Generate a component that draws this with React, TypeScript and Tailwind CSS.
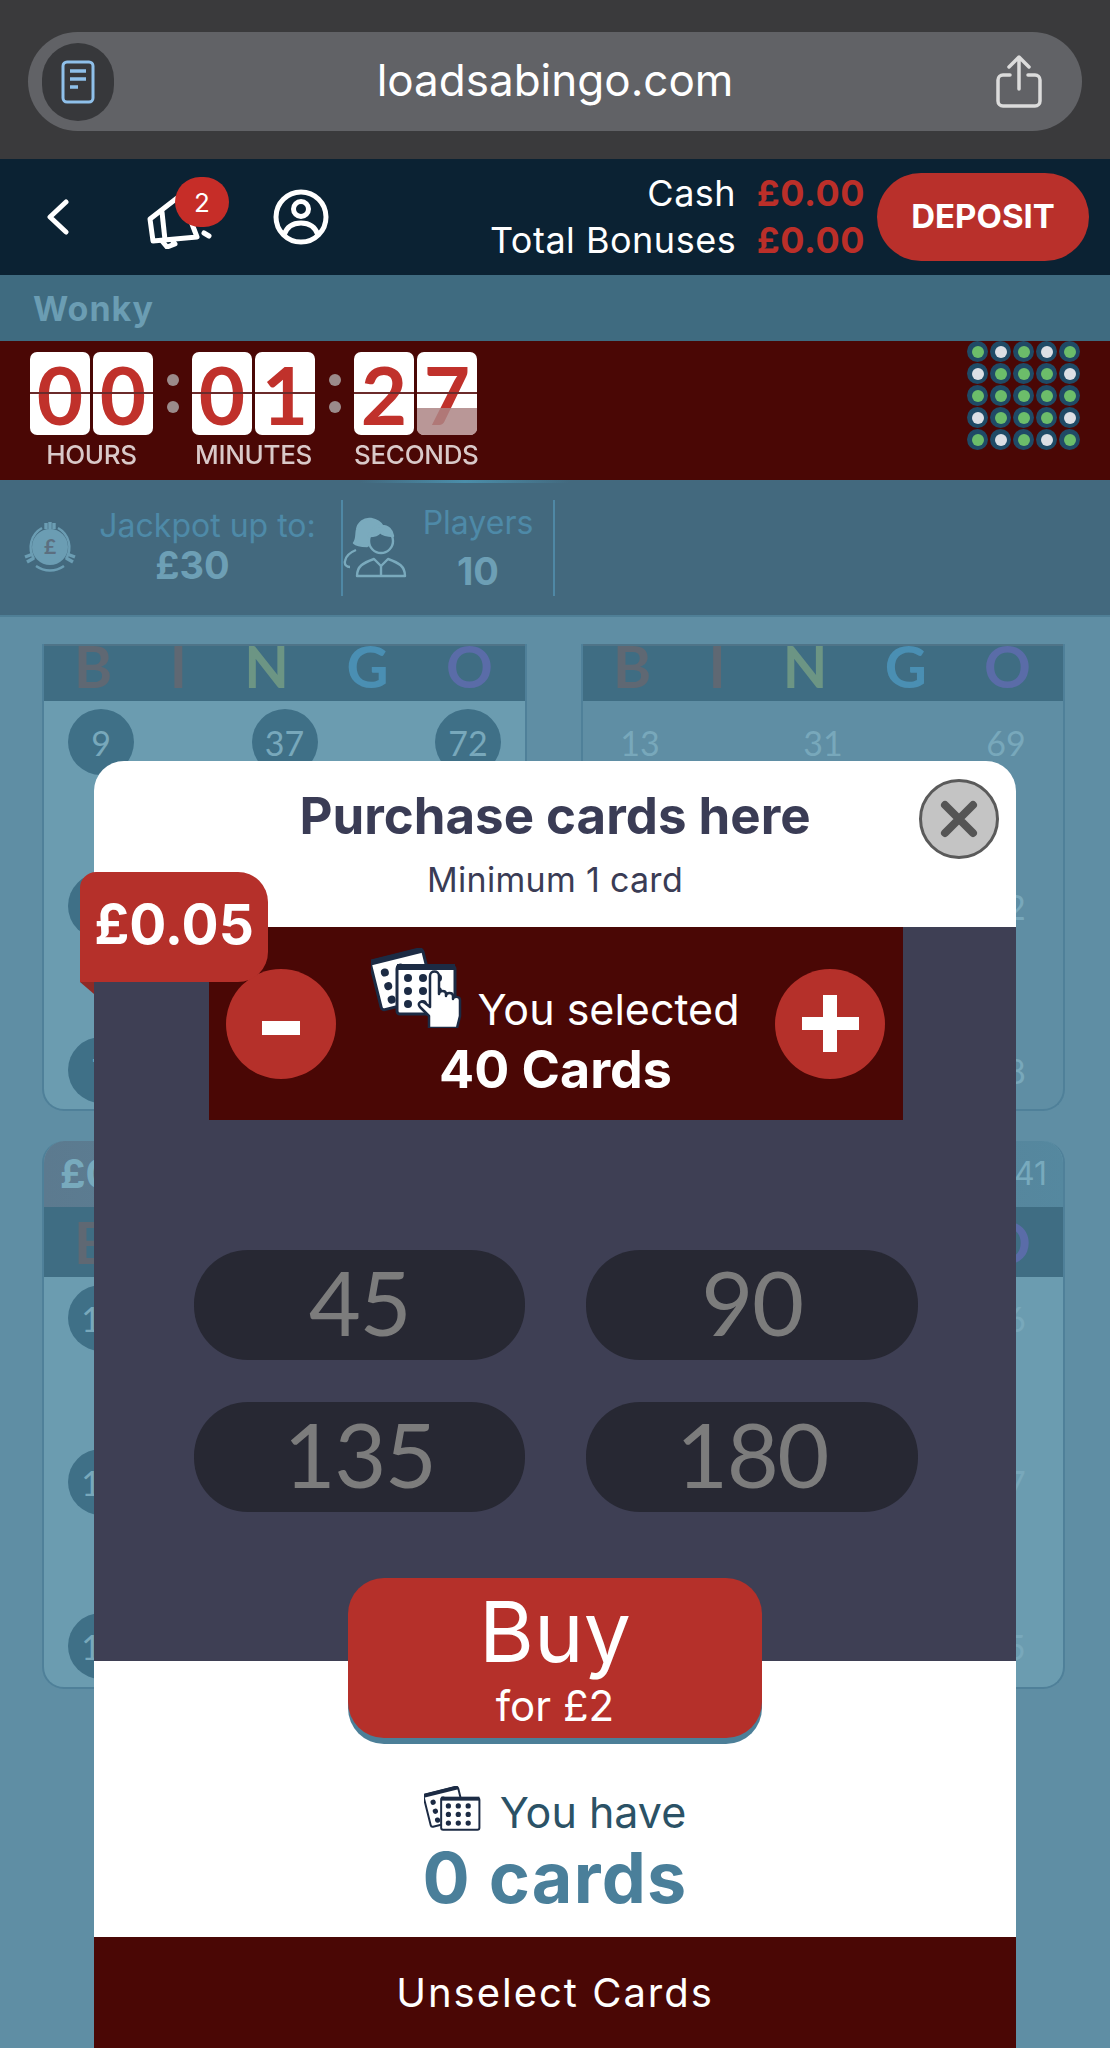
import React from 'react';

const dotRows = ['gwgwg', 'wgggw', 'ggggg', 'wgggw', 'gwgwg'];

const ReaderIcon = () => (
  <svg width="34" height="44" viewBox="0 0 34 44" fill="none" stroke="#8fc0ea" strokeWidth="3">
    <rect x="2" y="2" width="30" height="40" rx="4" />
    <path d="M9 11h16M9 19h16M9 27h8" strokeWidth="3.5" />
  </svg>
);

const ShareIcon = () => (
  <svg width="46" height="54" viewBox="0 0 46 54" fill="none" stroke="#dcdcdc" strokeWidth="3.5" strokeLinecap="round" strokeLinejoin="round">
    <path d="M23 34V3M13 12l10-10 10 10" />
    <path d="M14 20H7a5 5 0 0 0-5 5v21a5 5 0 0 0 5 5h32a5 5 0 0 0 5-5V25a5 5 0 0 0-5-5h-7" />
  </svg>
);

const Megaphone = () => (
  <svg width="70" height="58" viewBox="0 0 70 58" fill="none" stroke="#fff" strokeWidth="5" strokeLinejoin="round" strokeLinecap="round">
    <path d="M3 28L34 4l16 42L6 50z" />
    <path d="M15 21l3 28" />
    <path d="M15 50l5 6 8-3-3-4" />
    <path d="M58 30l5-3M57 42l5 3" />
  </svg>
);

const UserIcon = () => (
  <svg width="56" height="56" viewBox="0 0 56 56" fill="none" stroke="#fff" strokeWidth="5">
    <circle cx="28" cy="28" r="25" />
    <circle cx="28" cy="20" r="7.5" />
    <path d="M11 46c3-9 10-12 17-12s14 3 17 12" />
  </svg>
);

const CoinIcon = () => (
  <svg width="56" height="56" viewBox="0 0 56 56" fill="none" stroke="#6b9db3" strokeWidth="2.4">
    <path d="M12 39a22 22 0 0 1 8-31M36 8a22 22 0 0 1 8 31M14 46a24 24 0 0 0 28 0" />
    <circle cx="28" cy="27" r="18" fill="#6b9db3" stroke="none" />
    <path d="M24 3v6M28 2v7M32 3v6M3 37l8-3M5 42l7-4M53 37l-8-3M51 42l-7-4" strokeWidth="3.4" />
    <text x="28" y="34" textAnchor="middle" fontSize="21" fontWeight="700" fill="#5c6f80" stroke="none" fontFamily="Lato, sans-serif">£</text>
  </svg>
);

const PeopleIcon = () => (
  <svg width="70" height="64" viewBox="0 0 70 64" fill="none" stroke="#7aaabd" strokeWidth="2.4" strokeLinejoin="round">
    <path d="M24 30c-6 0-11-1-13-3 3-3 2-8 3-13 1-7 7-12 14-11 6 1 10 4 12 8l-8 14z" fill="#7aaabd" />
    <path d="M13 34c-5 2-10 5-11 11-1 4 2 6 5 6" />
    <circle cx="38" cy="25" r="12" fill="#43697e" />
    <path d="M26 20c3-9 8-11 13-10 6 0 10 4 11 10-8 0-11-2-13-4-2 3-6 4-11 4z" fill="#7aaabd" />
    <path d="M14 60c0-10 6-13 17-17l7 7 7-7c11 4 17 7 17 17z" />
    <path d="M38 50v10" />
  </svg>
);

const CardsIcon = ({ hand, width, height }: { hand?: boolean; width: number; height: number }) => (
  <svg width={width} height={height} viewBox="0 0 94 80">
    <g transform="rotate(-14 25 32)">
      <rect x="4" y="8" width="54" height="50" rx="3" fill="#fff" stroke="#1c2b44" strokeWidth="3" />
      <rect x="4" y="6" width="54" height="6" fill="#1c2b44" />
      {[22, 36, 50].map((y) => <circle key={y} cx="16" cy={y} r="4" fill="#1c2b44" />)}
      <circle cx="32" cy="21" r="4" fill="#1c2b44" />
    </g>
    <rect x="26" y="18" width="58" height="48" rx="3" fill="#fff" stroke="#1c2b44" strokeWidth="3" />
    <rect x="26" y="16" width="58" height="6" fill="#1c2b44" />
    {[30, 43, 56].map((y) =>
      [37, 52, 67].map((x) => <circle key={`${x}-${y}`} cx={x} cy={y} r="4" fill="#1c2b44" />),
    )}
    {hand && (
      <path
        d="M58 80V68l-9-9c-3-4 1-7 5-4l5 4V28c0-6 9-6 9 0v18c0-4 7-4 7 0v2c0-4 7-4 7 0v3c0-3 7-3 7 1v16l-3 12z"
        fill="#fff"
        stroke="#1c2b44"
        strokeWidth="2.5"
        strokeLinejoin="round"
      />
    )}
  </svg>
);

const Ball = ({ n, circled }: { n: number; circled?: boolean }) => (
  <div className={`w-[66px] h-[66px] rounded-full flex items-center justify-center font-['Lato',sans-serif] text-[34px] ${circled ? 'bg-[#3f7087] text-[#78a8bb]' : 'text-[#78a8bb]'}`}>
    {n}
  </div>
);

type CardProps = { rows: number[][]; light?: boolean; circled?: boolean; tall?: boolean; left?: string; right?: string };

const BingoCard = ({ rows, light, circled, tall, left, right }: CardProps) => (
  <div className={`border-x-2 border-b-2 border-[#4f8099] rounded-b-[22px] ${tall ? 'h-[548px] rounded-t-[22px] overflow-hidden' : 'h-[467px]'} ${light ? 'bg-[#6b9cb0]' : 'bg-[#5f8ea4]'}`}>
    {tall && (
      <div className="h-[66px] bg-gradient-to-r from-[#5c7a8f] to-[#55889f] flex items-center justify-between px-[16px]">
        <span className="text-[40px] font-bold text-[#78aabd]">{left}</span>
        <span className="text-[32px] text-[#78aabd]">{right}</span>
      </div>
    )}
    <div className={`bg-[#3f6d83] flex justify-between pl-[30px] pr-[32px] font-['Lato',sans-serif] font-bold text-[58px] ${tall ? 'h-[70px] items-center leading-none' : 'h-[57px] items-start leading-[40px] border-t-2 border-[#4f7488]'}`}>
      <span className="text-[#5f6873]">B</span>
      <span className="text-[#5f6873]">I</span>
      <span className="text-[#6c9584]">N</span>
      <span className="text-[#4a8fb3]">G</span>
      <span className="text-[#5a6ca8]">O</span>
    </div>
    <div className="flex flex-col gap-[98px] pt-[8px] px-[24px]">
      {rows.map((row) => (
        <div key={row[0]} className="flex justify-between">
          {row.map((n) => <Ball key={n} n={n} circled={circled} />)}
        </div>
      ))}
    </div>
  </div>
);

const Pill = ({ n }: { n: number }) => (
  <div className="h-[110px] rounded-[54px] bg-[#272833] flex items-center justify-center pb-[8px] font-['Lato',sans-serif] text-[90px] leading-none tracking-[-1.5px] text-[#7c7c7c]">
    {n}
  </div>
);

const App: React.FC = () => {
  return (
    <div className="relative w-[1110px] h-[2048px] overflow-hidden bg-[#5f8ea4] font-['Inter',sans-serif]">
      {/* browser bar */}
      <div className="h-[159px] bg-[#3a3a3c] pt-[32px] px-[28px]">
        <div className="relative h-[99px] rounded-[50px] bg-[#616266] flex items-center justify-between pl-[14px] pr-[40px]">
          <div className="w-[72px] h-[78px] rounded-full bg-[#37383b] flex items-center justify-center">
            <ReaderIcon />
          </div>
          <span className="text-[44px] text-white -mt-[3px]">loadsabingo.com</span>
          <ShareIcon />
        </div>
      </div>

      {/* account header */}
      <div className="h-[116px] bg-[#0b2233] flex items-center pl-[46px] pr-[21px]">
        <svg width="24" height="36" viewBox="0 0 24 36" fill="none" stroke="#fff" strokeWidth="5" strokeLinecap="round" strokeLinejoin="round">
          <path d="M20 3L4 18l16 15" />
        </svg>
        <div className="relative ml-[77px] mt-[6px]">
          <Megaphone />
          <div className="absolute -top-[14px] left-[28px] w-[54px] h-[50px] rounded-full bg-[#c62d28] text-white text-[26px] flex items-center justify-center">2</div>
        </div>
        <div className="ml-[56px]">
          <UserIcon />
        </div>
        <div className="ml-auto text-[36px] leading-[47px] text-white text-right tracking-[0.5px]">
          <div>Cash <span className="ml-[10px] font-bold text-[#bb2f29]">£0.00</span></div>
          <div>Total Bonuses <span className="ml-[10px] font-bold text-[#bb2f29]">£0.00</span></div>
        </div>
        <div className="ml-[12px] w-[212px] h-[88px] rounded-[44px] bg-[#b9302b] flex items-center justify-center text-white font-bold text-[33px]">
          DEPOSIT
        </div>
      </div>

      {/* game title */}
      <div className="h-[66px] bg-[#3f6b80] flex items-center pl-[33px] font-bold text-[34px] text-[#6b9db3] tracking-[1px]">Wonky</div>

      {/* countdown */}
      <div className="h-[139px] bg-[#4a0705] flex justify-between pt-[11px] pl-[30px] pr-[30px]">
        <div className="flex blur-[0.6px]">
          {[['0', '0', 'HOURS'], ['0', '1', 'MINUTES'], ['2', '7', 'SECONDS']].map(([a, b, label], i) => (
            <React.Fragment key={label}>
              {i > 0 && (
                <div className="w-[39px] h-[83px] flex flex-col items-center justify-center gap-[15px]">
                  <span className="w-[12px] h-[12px] rounded-full bg-[#9b8b8b]" />
                  <span className="w-[12px] h-[12px] rounded-full bg-[#9b8b8b]" />
                </div>
              )}
              <div className="flex flex-col items-center">
                <div className="flex gap-[3px]">
                  {[a, b].map((d, j) => (
                    <div key={j} className="relative w-[60px] h-[83px] rounded-[7px] bg-white overflow-hidden flex items-center justify-center font-['Lato',sans-serif] text-[80px] leading-none font-bold text-[#c0312b]">
                      {d}
                      <div className="absolute left-0 right-0 top-[40px] h-[2px] bg-[#6b2b2b]" />
                      {i === 2 && j === 1 && <div className="absolute left-0 right-0 bottom-0 h-[27px] bg-[#ad8585]/85" />}
                    </div>
                  ))}
                </div>
                <div className="w-[123px] text-center text-[26px] leading-[40px] font-medium text-[#d9c9c9] whitespace-nowrap tracking-[-0.3px]">{label}</div>
              </div>
            </React.Fragment>
          ))}
        </div>
        <div className="grid grid-cols-5 gap-x-[2px] gap-y-[1px] h-fit -mt-[11px]">
          {dotRows.join('').split('').map((c, i) => (
            <div key={i} className="w-[21px] h-[21px] rounded-full bg-[#1f4a66] flex items-center justify-center">
              <span className={`w-[12px] h-[12px] rounded-full ${c === 'g' ? 'bg-[#6cbd6a]' : 'bg-[#dcdfe5]'}`} />
            </div>
          ))}
        </div>
      </div>

      {/* jackpot + players */}
      <div className="relative h-[137px] bg-[#43697e] border-b-2 border-[#4f7f96] flex items-center pl-[22px]">
        <div className="absolute left-[360px] top-0 w-[210px] h-[3px] bg-gradient-to-r from-transparent via-[#4a8eaa] to-transparent" />
        <CoinIcon />
        <div className="w-[263px] text-center pl-[10px] pr-[14px]">
          <div className="text-[32px] leading-[44px] text-[#4e8aa8] whitespace-nowrap">Jackpot up to:</div>
          <div className="text-[38px] leading-[44px] font-bold text-[#6d9fb5] -ml-[30px] -mt-[5px] mb-[5px]">£30</div>
        </div>
        <div className="w-[214px] h-[96px] border-x-2 border-[#4f88a5] flex items-center">
          <PeopleIcon />
          <div className="flex-1 text-center pr-[10px]">
            <div className="text-[32px] leading-[46px] text-[#4e8aa8]">Players</div>
            <div className="text-[38px] leading-[50px] font-bold text-[#6d9fb5]">10</div>
          </div>
        </div>
      </div>

      {/* bingo cards behind the modal */}
      <div className="grid grid-cols-[485px_484px] gap-x-[54px] pl-[42px] pt-[27px]">
        <BingoCard light circled rows={[[9, 37, 72], [5, 38, 66], [7, 39, 70]]} />
        <BingoCard rows={[[13, 31, 69], [14, 33, 62], [15, 36, 68]]} />
      </div>
      <div className="grid grid-cols-[485px_484px] gap-x-[54px] pl-[42px] pt-[30px]">
        <BingoCard light circled tall left="£0" right="" rows={[[16, 34, 61], [12, 44, 63], [17, 48, 64]]} />
        <BingoCard light tall left="" right="41" rows={[[1, 46, 56], [2, 47, 57], [3, 49, 65]]} />
      </div>

      {/* purchase modal */}
      <div className="absolute left-[94px] top-[761px] w-[922px] h-[1287px] flex flex-col">
        <div className="h-[166px] bg-white rounded-t-[30px] text-center text-[#3a3c55] pt-[24px]">
          <div className="text-[51px] leading-[62px] font-bold">Purchase cards here</div>
          <div className="text-[34px] leading-[44px] mt-[11px] tracking-[0.3px]">Minimum 1 card</div>
        </div>

        <div className="relative h-[734px] bg-[#3e3f54]">
          <div className="ml-[115px] w-[694px] h-[193px] bg-[#4a0705] flex items-center justify-between pl-[17px] pr-[18px]">
            <div className="w-[110px] h-[110px] rounded-full bg-[#b5302a] flex items-center justify-center">
              <span className="w-[38px] h-[14px] bg-white mt-[8px]" />
            </div>
            <div className="flex flex-col items-center text-white">
              <div className="flex items-end -mt-[2px]">
                <CardsIcon hand width={94} height={80} />
                <span className="text-[43px] leading-[48px] ml-[12px] -mb-[5px]">You selected</span>
              </div>
              <div className="text-[52px] leading-[56px] font-bold mt-[14px]">40 Cards</div>
            </div>
            <div className="relative w-[110px] h-[110px] rounded-full bg-[#b5302a] flex items-center justify-center">
              <span className="absolute w-[57px] h-[13px] bg-white" />
              <span className="absolute w-[14px] h-[57px] bg-white" />
            </div>
          </div>

          <div className="grid grid-cols-[331px_332px] gap-x-[61px] gap-y-[42px] ml-[100px] mt-[130px]">
            {[45, 90, 135, 180].map((n) => <Pill key={n} n={n} />)}
          </div>
        </div>

        <div className="h-[276px] bg-white flex flex-col items-center pt-[126px]">
          <div className="flex items-center h-[50px]">
            <CardsIcon width={62} height={53} />
            <span className="text-[43px] leading-[50px] text-[#2b5266] ml-[14px]">You have</span>
          </div>
          <div className="text-[70px] leading-[70px] font-bold text-[#4a7f9a] tracking-[1.2px] mt-[6px]">0 cards</div>
        </div>

        <div className="flex-1 bg-[#4a0705] flex items-center justify-center text-[40px] text-white tracking-[2px]">Unselect Cards</div>

        {/* close button */}
        <div className="absolute left-[825px] top-[18px] w-[80px] h-[80px] rounded-full bg-[#c4c4c4] border-[3px] border-[#5a5a5a] flex items-center justify-center">
          <svg width="40" height="40" viewBox="0 0 40 40" stroke="#555" strokeWidth="8" strokeLinecap="round">
            <path d="M6 6l28 28M34 6L6 34" />
          </svg>
        </div>

        {/* price tag */}
        <div className="absolute -left-[14px] top-[111px] w-[188px] h-[110px] rounded-tl-[16px] rounded-r-[30px] bg-[#b5302a] flex items-center justify-center text-[55px] font-bold text-white pb-[6px]">
          £0.05
        </div>
        <div className="absolute -left-[14px] top-[221px] w-0 h-0 border-t-[12px] border-l-[14px] border-t-[#8e2a26] border-l-transparent" />

        {/* buy button */}
        <div className="absolute left-[254px] top-[817px] w-[414px] h-[160px] rounded-[36px] bg-[#b5302a] shadow-[0_6px_0_#4c7f98] flex flex-col items-center pt-[4px] text-white">
          <div className="text-[84px] leading-[100px]">Buy</div>
          <div className="text-[42px] leading-[40px] mt-[4px]">for £2</div>
        </div>
      </div>
    </div>
  );
};

export default App;
